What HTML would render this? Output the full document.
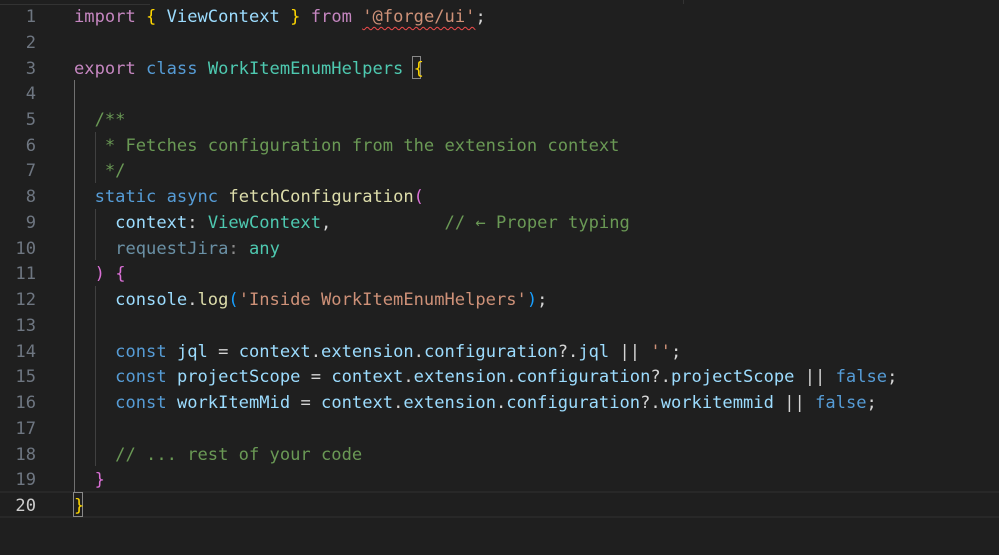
<!DOCTYPE html>
<html><head><meta charset="utf-8"><style>
html,body{margin:0;padding:0;background:#1f1f1f;width:999px;height:555px;overflow:hidden}
.ed{position:relative;font-family:"DejaVu Sans Mono","Liberation Mono",monospace;font-size:17.1px;}
.l{position:absolute;left:0;height:25.74px;line-height:25.74px;white-space:pre;width:999px}
.n{position:absolute;right:963px;color:#6e7681;text-align:right}
.c{position:absolute;left:74px;color:#d4d4d4}
.k{color:#c586c0}.b{color:#569cd6}.t{color:#4ec9b0}.v{color:#9cdcfe}.f{color:#dcdcaa}.s{color:#ce9178}.cm{color:#6a9955}
.y{color:#ffd700}.p{color:#da70d6}.bl{color:#179fff}.dim{opacity:.6}
.g{position:absolute;width:1px;background:#404040}
.sq{text-decoration:underline wavy #f14c4c;text-underline-offset:4px;text-decoration-thickness:1px}
</style></head><body><div class="ed">
<div style="position:absolute;left:0;top:4px;width:150px;height:1px;background:#333"></div>
<div style="position:absolute;left:683px;top:0;width:1px;height:4px;background:#333"></div>
<div style="position:absolute;left:0;top:491px;width:999px;height:27px;border-top:2px solid #282828;border-bottom:2px solid #282828;box-sizing:border-box"></div>
<div class="g" style="left:74px;top:80px;height:412px;background:#707070"></div>
<div class="g" style="left:95px;top:132px;height:51px"></div>
<div class="g" style="left:95px;top:209px;height:51px"></div>
<div class="g" style="left:95px;top:286px;height:180px"></div>
<div style="position:absolute;left:412px;top:56px;width:9px;height:23px;border:1px solid #888;box-sizing:border-box"></div>
<div style="position:absolute;left:73px;top:492px;width:10px;height:25px;border:1px solid #888;box-sizing:border-box"></div>
<div style="position:absolute;left:0;top:5px;width:999px">
<div class="l" style="top:0px"><span class="n">1</span><span class="c"><span class="k">import</span> <span class="y">{</span> <span class="v">ViewContext</span> <span class="y">}</span> <span class="k">from</span> <span class="s sq">'@forge/ui'</span>;</span></div>
<div class="l" style="top:25.7px"><span class="n">2</span></div>
<div class="l" style="top:51.5px"><span class="n">3</span><span class="c"><span class="k">export</span> <span class="b">class</span> <span class="t">WorkItemEnumHelpers</span> <span class="y">{</span></span></div>
<div class="l" style="top:77.2px"><span class="n">4</span></div>
<div class="l" style="top:103px"><span class="n">5</span><span class="c cm">  /**</span></div>
<div class="l" style="top:128.7px"><span class="n">6</span><span class="c cm">   * Fetches configuration from the extension context</span></div>
<div class="l" style="top:154.4px"><span class="n">7</span><span class="c cm">   */</span></div>
<div class="l" style="top:180.2px"><span class="n">8</span><span class="c">  <span class="b">static</span> <span class="b">async</span> <span class="f">fetchConfiguration</span><span class="p">(</span></span></div>
<div class="l" style="top:205.9px"><span class="n">9</span><span class="c">    <span class="v">context</span>: <span class="t">ViewContext</span>,           <span class="cm">// ← Proper typing</span></span></div>
<div class="l" style="top:231.7px"><span class="n">10</span><span class="c">    <span class="dim"><span class="v">requestJira</span>:</span> <span class="t">any</span></span></div>
<div class="l" style="top:257.4px"><span class="n">11</span><span class="c">  <span class="p">)</span> <span class="p">{</span></span></div>
<div class="l" style="top:283.1px"><span class="n">12</span><span class="c">    <span class="v">console</span>.<span class="f">log</span><span class="bl">(</span><span class="s">'Inside WorkItemEnumHelpers'</span><span class="bl">)</span>;</span></div>
<div class="l" style="top:308.9px"><span class="n">13</span></div>
<div class="l" style="top:334.6px"><span class="n">14</span><span class="c">    <span class="b">const</span> <span class="v">jql</span> = <span class="v">context</span>.<span class="v">extension</span>.<span class="v">configuration</span>?.<span class="v">jql</span> || <span class="s">''</span>;</span></div>
<div class="l" style="top:360.4px"><span class="n">15</span><span class="c">    <span class="b">const</span> <span class="v">projectScope</span> = <span class="v">context</span>.<span class="v">extension</span>.<span class="v">configuration</span>?.<span class="v">projectScope</span> || <span class="b">false</span>;</span></div>
<div class="l" style="top:386.1px"><span class="n">16</span><span class="c">    <span class="b">const</span> <span class="v">workItemMid</span> = <span class="v">context</span>.<span class="v">extension</span>.<span class="v">configuration</span>?.<span class="v">workitemmid</span> || <span class="b">false</span>;</span></div>
<div class="l" style="top:411.9px"><span class="n">17</span></div>
<div class="l" style="top:437.6px"><span class="n">18</span><span class="c">    <span class="cm">// ... rest of your code</span></span></div>
<div class="l" style="top:463.3px"><span class="n">19</span><span class="c">  <span class="p">}</span></span></div>
<div class="l" style="top:489.1px"><span class="n" style="color:#cccccc">20</span><span class="c"><span class="y">}</span></span></div>
</div>
</div></body></html>
